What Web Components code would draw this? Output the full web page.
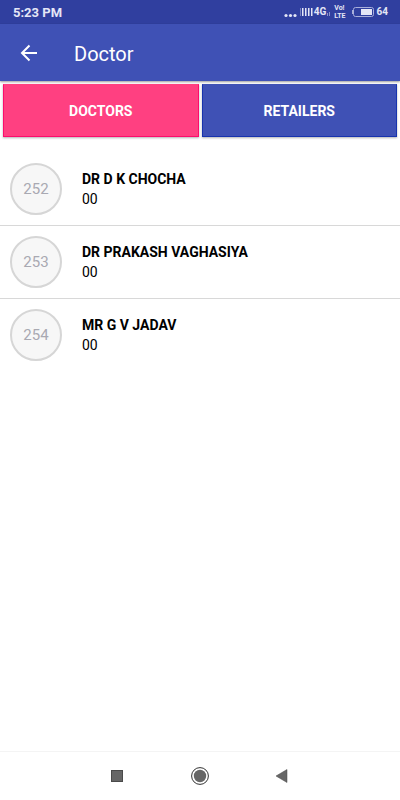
<!DOCTYPE html>
<html lang="en">
<head>
<meta charset="utf-8">
<meta name="viewport" content="width=device-width, initial-scale=1">
<title>Doctor</title>
<style>
body {
  margin: 0;
  font-family: Roboto, "Liberation Sans", sans-serif;
  background-color: #fff;
}
</style>
</head>
<body>

<doctor-screen>
  <status-bar slot="top" time="5:23 PM" battery="64"></status-bar>
  <app-bar slot="top">Doctor</app-bar>
  <tab-buttons slot="top" active="DOCTORS" tabs="DOCTORS,RETAILERS"></tab-buttons>
  <contact-row number="252">DR D K CHOCHA<span slot="detail">00</span></contact-row>
  <contact-row number="253">DR PRAKASH VAGHASIYA<span slot="detail">00</span></contact-row>
  <contact-row number="254">MR G V JADAV<span slot="detail">00</span></contact-row>
  <nav-bar slot="bottom"></nav-bar>
</doctor-screen>

<script>
function createTemplate ( html ) {
    const template			= document.createElement("template");
    template.innerHTML			= html;
    return template;
}

class BaseElement extends HTMLElement {
    constructor () {
	super();

	this.attachShadow({ mode: "open" });
	this.shadowRoot.appendChild(
	    this.constructor.template.content.cloneNode(true)
	);
    }

    $ ( selector ) {
	return this.shadowRoot.querySelector( selector );
    }
}


class DoctorScreen extends BaseElement {
    static template			= createTemplate(`
<style>
:host {
  display: flex;
  flex-direction: column;
  min-height: 100vh;
}
main {
  flex: 1;
  padding-top: 16px;
}
</style>
<slot name="top"></slot>
<main><slot></slot></main>
<slot name="bottom"></slot>
`);
}


class StatusBar extends BaseElement {
    static template			= createTemplate(`
<style>
:host {
  display: flex;
  align-items: center;
  height: 24px;
  padding: 0 12px 0 13px;
  color: #e4e6f6;
  background-color: #303f9f;
  font-size: 13px;
  font-weight: 700;
}
.time {
  flex: 1;
}
.icons {
  display: flex;
  align-items: center;
}
svg {
  display: block;
  fill: currentColor;
}
.network {
  font-size: 10px;
  line-height: 12px;
}
.volte {
  display: grid;
  margin: 0 6px 0 3px;
  font-size: 7px;
  line-height: 8px;
}
.battery {
  margin-left: 3px;
  font-size: 10px;
  line-height: 12px;
}
</style>
<span class="time"></span>
<div class="icons">
  <svg width="30" height="14" viewBox="0 0 30 14" aria-hidden="true">
    <circle cx="2" cy="10.5" r="1.6"/>
    <circle cx="6.5" cy="10.5" r="1.6"/>
    <circle cx="11" cy="10.5" r="1.6"/>
    <path opacity=".4" d="M16 3h1v8h-1z"/>
    <path d="M18 3h1.5v8H18zM21 3h1.5v8H21zM24 3h1.5v8H24zM27 3h1.5v8H27z"/>
  </svg>
  <span class="network">4G</span>
  <svg width="5" height="14" viewBox="0 0 5 14" aria-hidden="true">
    <path opacity=".5" d="M1 8h1v3H1zM3 7h1v4H3z"/>
  </svg>
  <div class="volte"><span>Vo!</span><span>LTE</span></div>
  <svg width="22" height="10" viewBox="0 0 22 10" aria-hidden="true">
    <rect x="1.5" y=".5" width="20" height="9" rx="2" fill="none" stroke="#a9afdb"/>
    <path fill="#a9afdb" d="M0 3h1v4H0z"/>
    <path d="M9 2h11v6H9z"/>
  </svg>
  <span class="battery"></span>
</div>
`);

    connectedCallback () {
	this.$(".time").textContent	= this.getAttribute("time");
	this.$(".battery").textContent	= this.getAttribute("battery");
    }
}


class AppBar extends BaseElement {
    static template			= createTemplate(`
<style>
:host {
  display: flex;
  align-items: center;
  height: 57px;
  padding-left: 17px;
  color: #fff;
  background-color: #3f51b5;
  box-shadow: 0 1px 2px rgba(0, 0, 0, .4);
}
button {
  padding: 0;
  border: none;
  color: inherit;
  background: none;
}
svg {
  display: block;
}
h1 {
  margin: 0 0 0 33px;
  padding-top: 2px;
  font-size: 20px;
  font-weight: 400;
  line-height: 24px;
}
</style>
<button type="button" aria-label="Back">
  <svg width="24" height="24" viewBox="0 0 24 24" fill="none" stroke="currentColor" stroke-width="2" aria-hidden="true">
    <path d="M20 12H5M12.5 4.500L5 12l7.5 7.5"/>
  </svg>
</button>
<h1><slot></slot></h1>
`);
}


class TabButtons extends BaseElement {
    static template			= createTemplate(`
<style>
:host {
  display: flex;
  gap: 3px;
  padding: 3px 3px 0;
}
button {
  flex: 1;
  height: 53px;
  border: 1px solid #1733ae;
  border-top-color: #3f51b5;
  color: #fff;
  background-color: #3f51b5;
  box-shadow: 0 1px 2px rgba(0, 0, 0, .3);
  font-family: inherit;
  font-size: 14px;
  font-weight: 700;
}
button.active {
  border-color: #fb0d6c;
  border-top-color: #ff4081;
  background-color: #ff4081;
}
</style>
`);

    connectedCallback () {
	const active			= this.getAttribute("active");

	for ( let name of this.getAttribute("tabs").split(",") ) {
	    const $button		= document.createElement("button");

	    $button.type		= "button";
	    $button.textContent		= name;
	    $button.classList.toggle("active", name === active );
	    $button.onclick		= () => this.select( $button );

	    this.shadowRoot.appendChild( $button );
	}
    }

    select ( $selected ) {
	for ( let $button of this.shadowRoot.querySelectorAll("button") )
	    $button.classList.toggle("active", $button === $selected );
    }
}


class ContactRow extends BaseElement {
    static template			= createTemplate(`
<style>
:host {
  display: flex;
  align-items: center;
  gap: 20px;
  padding: 10px;
  border-bottom: 1px solid #d8d8d8;
  color: #000;
}
:host(:last-of-type) {
  border-bottom: none;
}
.number {
  box-sizing: border-box;
  display: grid;
  place-items: center;
  width: 52px;
  height: 52px;
  border: 2px solid #d6d6d6;
  border-radius: 50%;
  color: #a9a9b2;
  background-color: #f7f7f7;
  font-size: 15px;
}
.name {
  font-size: 14px;
  font-weight: 700;
  line-height: 20px;
}
.detail {
  font-size: 14px;
  line-height: 20px;
}
</style>
<div class="number"></div>
<div>
  <div class="name"><slot></slot></div>
  <div class="detail"><slot name="detail"></slot></div>
</div>
`);

    connectedCallback () {
	this.$(".number").textContent	= this.getAttribute("number");
    }
}


class NavBar extends BaseElement {
    static template			= createTemplate(`
<style>
:host {
  display: flex;
  justify-content: center;
  align-items: center;
  gap: 63px;
  height: 48px;
  border-top: 1px solid #f4f4f4;
  background-color: #fff;
}
button {
  padding: 0;
  border: none;
  background: none;
}
svg {
  display: block;
}
</style>
<button type="button" aria-label="Recent apps">
  <svg width="20" height="20" viewBox="0 0 20 20" aria-hidden="true">
    <rect x="4.5" y="4.5" width="11" height="11" fill="#666" stroke="#4a4a4a"/>
  </svg>
</button>
<button type="button" aria-label="Home">
  <svg width="20" height="20" viewBox="0 0 20 20" aria-hidden="true">
    <circle cx="10" cy="10" r="8.4" fill="none" stroke="#333"/>
    <circle cx="10" cy="10" r="6.2" fill="#666"/>
  </svg>
</button>
<button type="button" aria-label="Back">
  <svg width="20" height="20" viewBox="0 0 20 20" aria-hidden="true">
    <path d="M3 10L14 3.5v13z" fill="#666" stroke="#4a4a4a" stroke-width=".5"/>
  </svg>
</button>
`);
}


customElements.define("doctor-screen", DoctorScreen );
customElements.define("status-bar", StatusBar );
customElements.define("app-bar", AppBar );
customElements.define("tab-buttons", TabButtons );
customElements.define("contact-row", ContactRow );
customElements.define("nav-bar", NavBar );
</script>
</body>
</html>
